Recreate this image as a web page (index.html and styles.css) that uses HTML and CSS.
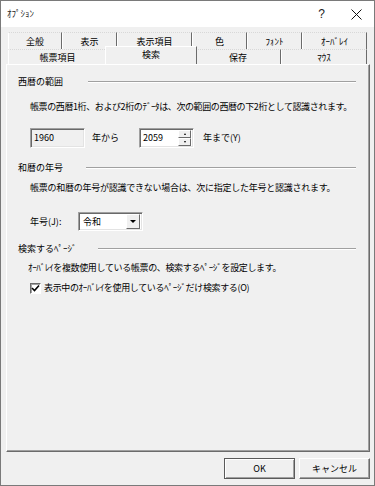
FILE: index.html
```html
<!DOCTYPE html>
<html lang="ja">
<head>
<meta charset="utf-8">
<title>オプション</title>
<link rel="stylesheet" href="styles.css">
</head>
<body>
<div class="window">
  <div class="titlebar">
    <span class="title">ｵﾌﾟｼｮﾝ</span>
    <span class="tb-btn help">?</span>
    <span class="tb-btn close">
      <svg width="11" height="11" viewBox="0 0 11 11"><path d="M0.5 0.5 L10.5 10.5 M10.5 0.5 L0.5 10.5" stroke="#111" stroke-width="1" fill="none"/></svg>
    </span>
  </div>
  <div class="tabs">
    <div class="tab-row back">
      <div class="tab w54">全般</div>
      <div class="tab w55">表示</div>
      <div class="tab w75">表示項目</div>
      <div class="tab w55">色</div>
      <div class="tab w55">ﾌｫﾝﾄ</div>
      <div class="tab w65">ｵｰﾊﾞﾚｲ</div>
    </div>
    <div class="tab-row front">
      <div class="tab w99">帳票項目</div>
      <div class="tab w88 selected">検索</div>
      <div class="tab w86">保存</div>
      <div class="tab w86">ﾏｳｽ</div>
    </div>
  </div>
  <div class="page">
    <div class="sec-head"><span>西暦の範囲</span><span class="rule r1"></span></div>
    <p class="desc d1">帳票の西暦1桁、および2桁のﾃﾞｰﾀは、次の範囲の西暦の下2桁として認識されます。</p>
    <div class="row years">
      <div class="field disabled w55f">1960</div>
      <span class="lbl from">年から</span>
      <div class="field spin w55f">
        <span class="val">2059</span>
        <span class="spinbox">
          <span class="sp up"><i class="arr-up"></i></span>
          <span class="sp down"><i class="arr-down"></i></span>
        </span>
      </div>
      <span class="lbl to">年まで(Y)</span>
    </div>

    <div class="sec-head s2"><span>和暦の年号</span><span class="rule r2"></span></div>
    <p class="desc d2">帳票の和暦の年号が認識できない場合は、次に指定した年号と認識されます。</p>
    <div class="row era">
      <span class="lbl eralbl">年号(J):</span>
      <div class="field combo">
        <span class="val">令和</span>
        <span class="dd"><i class="tri"></i></span>
      </div>
    </div>

    <div class="sec-head s3"><span>検索するﾍﾟｰｼﾞ</span><span class="rule r3"></span></div>
    <p class="desc d3">ｵｰﾊﾞﾚｲを複数使用している帳票の、検索するﾍﾟｰｼﾞを設定します。</p>
    <label class="check">
      <span class="box">
        <svg width="9" height="9" viewBox="0 0 9 9"><path d="M1 4 L3.5 6.5 L8 1.5" stroke="#000" stroke-width="1.6" fill="none"/></svg>
      </span>
      <span class="chk-text">表示中のｵｰﾊﾞﾚｲを使用しているﾍﾟｰｼﾞだけ検索する(O)</span>
    </label>
  </div>
  <div class="footer">
    <button class="btn ok">OK</button>
    <button class="btn cancel">キャンセル</button>
  </div>
</div>
</body>
</html>
```

FILE: styles.css
```css
* { box-sizing: border-box; }
html, body { margin: 0; padding: 0; background: #f0f0f0; }
body {
  font-family: "Noto Sans CJK JP", "Noto Sans", sans-serif;
  font-size: 9px;
  line-height: 12px;
  color: #000;
}
.window {
  width: 375px;
  height: 486px;
  border: 1px solid #7a7a7a;
  background: #f0f0f0;
  display: flex;
  flex-direction: column;
}
.titlebar {
  height: 26px;
  background: #fff;
  display: flex;
  align-items: center;
  flex-shrink: 0;
}
.title { flex: 1; padding-left: 6px; color: #222; }
.tb-btn {
  width: 35px;
  height: 26px;
  display: flex;
  align-items: center;
  justify-content: center;
}
.help { font-family: "Liberation Sans", sans-serif; font-size: 12px; color: #222; }
.close svg { display: block; }

.tabs { margin: 5px 0 0 7px; flex-shrink: 0; }
.tab-row { display: flex; }
.tab-row.back { height: 17px; }
.tab-row.front { height: 15px; position: relative; z-index: 1; }
.tab {
  flex-shrink: 0;
  background: #f0f0f0;
  border-top: 1px dotted #d8d8d8;
  border-left: 1px solid #fff;
  border-right: 1px solid #6b6b6b;
  text-align: center;
}
.tab-row.back .tab { height: 17px; padding-top: 2px; line-height: 14px; }
.tab-row.front .tab { height: 15px; line-height: 15px; }
.tab-row.front .tab.selected {
  position: relative;
  height: 18px;
  margin: -3px -2px 0 -2px;
  line-height: 15px;
  border-top: 1px solid #fff;
  z-index: 2;
}
.w54 { width: 54px; } .w55 { width: 55px; } .w75 { width: 75px; } .w65 { width: 65px; }
.w99 { width: 99px; } .w88 { width: 92px; } .w86 { width: 86px; }

.page {
  margin: 0 4px 0 5px;
  height: 388px;
  flex-shrink: 0;
  border-top: 1px solid #fff;
  border-left: 1px solid #fff;
  border-right: 1px solid #6b6b6b;
  border-bottom: 1px solid #6b6b6b;
  box-shadow: inset -1px -1px 0 #a0a0a0;
  padding: 11px 13px 0 11px;
}
.sec-head { display: flex; align-items: center; height: 12px; }
.rule {
  flex: 1;
  height: 2px;
  border-top: 1px solid #a0a0a0;
  border-bottom: 1px solid #fff;
}
.r1 { margin-left: 25px; }
.r2 { margin-left: 23px; }
.r3 { margin-left: 21px; }
.s2 { margin-top: 14px; }
.s3 { margin-top: 12px; }
.desc { margin: 0; padding-left: 12px; white-space: nowrap; }
.d1 { margin-top: 13px; letter-spacing: -0.4px; }
.d2 { margin-top: 8px; letter-spacing: -0.25px; }
.d3 { margin-top: 7px; padding-left: 10px; letter-spacing: -0.35px; }

.row { display: flex; align-items: center; padding-left: 12px; }
.years { margin-top: 15px; height: 20px; }
.field {
  height: 20px;
  border-top: 1px solid #a0a0a0;
  border-left: 1px solid #a0a0a0;
  border-right: 1px solid #fff;
  border-bottom: 1px solid #fff;
  box-shadow: inset 1px 1px 0 #696969, inset -1px -1px 0 #e3e3e3;
  background: #fff;
  display: flex;
  align-items: center;
  padding-left: 3px;
}
.field.disabled { background: #f0f0f0; }
.w55f { width: 55px; }
.lbl { white-space: nowrap; }
.from { margin-left: 7px; margin-right: 20px; }
.to { margin-left: 9px; }
.spin { position: relative; padding-right: 2px; }
.spin .val { flex: 1; }
.spinbox { display: flex; flex-direction: column; width: 13px; height: 16px; }
.sp {
  flex: 1;
  background: #f0f0f0;
  border-top: 1px solid #fff;
  border-left: 1px solid #fff;
  border-right: 1px solid #6b6b6b;
  border-bottom: 1px solid #6b6b6b;
  display: flex;
  align-items: center;
  justify-content: center;
}
.arr-up, .arr-down { display: block; width: 0; height: 0; border-left: 1.5px solid transparent; border-right: 1.5px solid transparent; }
.arr-up { border-bottom: 2px solid #000; }
.arr-down { border-top: 2px solid #000; }

.era { margin-top: 18px; height: 19px; }
.eralbl { width: 48px; }
.combo { width: 65px; height: 19px; padding-right: 2px; }
.combo .val { flex: 1; padding-left: 1px; }
.dd {
  width: 14px;
  height: 15px;
  background: #f0f0f0;
  border-top: 1px solid #fff;
  border-left: 1px solid #fff;
  border-right: 1px solid #6b6b6b;
  border-bottom: 1px solid #6b6b6b;
  display: flex;
  align-items: center;
  justify-content: center;
}
.tri { display: block; width: 0; height: 0; border-left: 3px solid transparent; border-right: 3px solid transparent; border-top: 3px solid #000; }

.check { display: flex; align-items: center; margin-top: 8px; padding-left: 12px; white-space: nowrap; }
.chk-text { letter-spacing: -0.35px; }
.box {
  width: 11px;
  height: 11px;
  border-top: 1px solid #696969;
  border-left: 1px solid #696969;
  border-right: 1px solid #fff;
  border-bottom: 1px solid #fff;
  box-shadow: inset 1px 1px 0 #a0a0a0;
  background: #fff;
  display: flex;
  align-items: center;
  justify-content: center;
  margin-right: 3px;
}
.box svg { display: block; }

.footer { display: flex; justify-content: flex-end; gap: 4px; padding: 6px 4px 0 0; }
.btn {
  width: 71px;
  height: 21px;
  font-family: "Noto Sans CJK JP", "Noto Sans", sans-serif;
  font-size: 9px;
  line-height: 12px;
  color: #000;
  background: #f0f0f0;
  padding: 0;
  margin: 0;
}
.ok {
  border: 1px solid #5a5a5a;
  box-shadow: inset 1px 1px 0 #fff, inset -1px -1px 0 #a0a0a0;
}
.cancel {
  border-top: 1px solid #fff;
  border-left: 1px solid #fff;
  border-right: 1px solid #6b6b6b;
  border-bottom: 1px solid #6b6b6b;
  box-shadow: inset -1px -1px 0 #a0a0a0;
}
```
